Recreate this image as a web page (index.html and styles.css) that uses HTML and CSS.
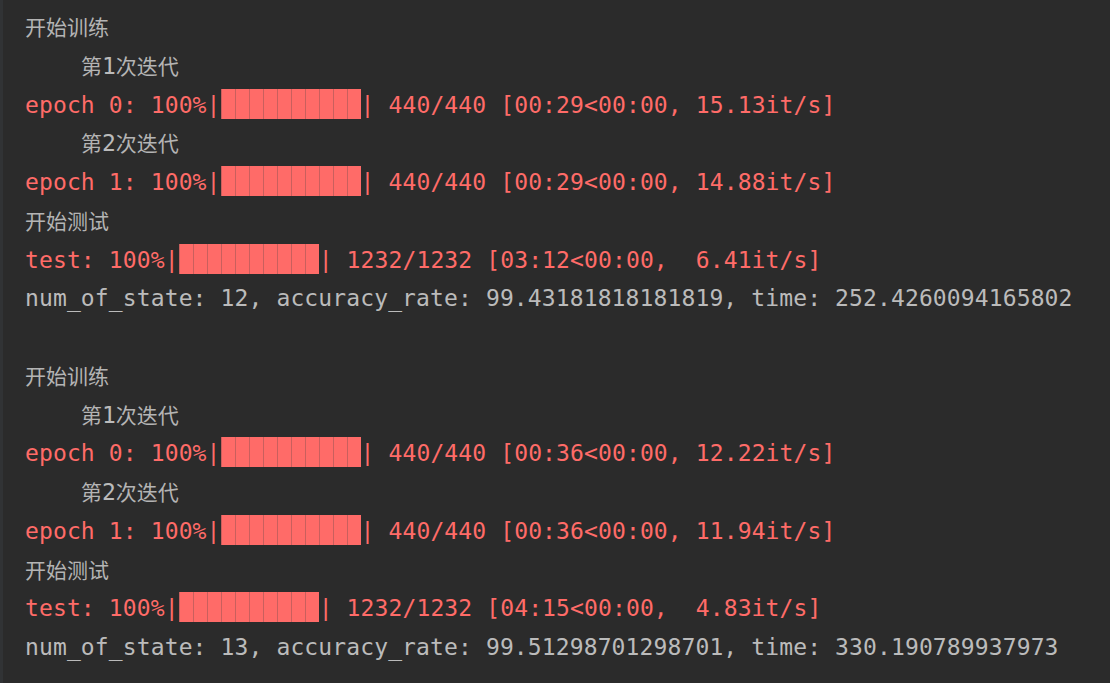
FILE: index.html
```html
<!DOCTYPE html>
<html lang="zh">
<head>
<meta charset="utf-8">
<title>Console</title>
<link rel="stylesheet" href="styles.css">
</head>
<body>
<div class="console">
  <div class="line out"><span class="cjk">开始训练</span></div>
  <div class="line out">    <span class="cjk">第</span>1<span class="cjk">次迭代</span></div>
  <div class="line err">epoch 0: 100%|<span class="bar">██████████</span>| 440/440 [00:29&lt;00:00, 15.13it/s]</div>
  <div class="line out">    <span class="cjk">第</span>2<span class="cjk">次迭代</span></div>
  <div class="line err">epoch 1: 100%|<span class="bar">██████████</span>| 440/440 [00:29&lt;00:00, 14.88it/s]</div>
  <div class="line out"><span class="cjk">开始测试</span></div>
  <div class="line err">test: 100%|<span class="bar">██████████</span>| 1232/1232 [03:12&lt;00:00,  6.41it/s]</div>
  <div class="line out">num_of_state: 12, accuracy_rate: 99.43181818181819, time: 252.4260094165802</div>
  <div class="line out"> </div>
  <div class="line out"><span class="cjk">开始训练</span></div>
  <div class="line out">    <span class="cjk">第</span>1<span class="cjk">次迭代</span></div>
  <div class="line err">epoch 0: 100%|<span class="bar">██████████</span>| 440/440 [00:36&lt;00:00, 12.22it/s]</div>
  <div class="line out">    <span class="cjk">第</span>2<span class="cjk">次迭代</span></div>
  <div class="line err">epoch 1: 100%|<span class="bar">██████████</span>| 440/440 [00:36&lt;00:00, 11.94it/s]</div>
  <div class="line out"><span class="cjk">开始测试</span></div>
  <div class="line err">test: 100%|<span class="bar">██████████</span>| 1232/1232 [04:15&lt;00:00,  4.83it/s]</div>
  <div class="line out">num_of_state: 13, accuracy_rate: 99.51298701298701, time: 330.190789937973</div>
</div>
</body>
</html>
```
FILE: styles.css
```css
html, body {
  margin: 0;
  padding: 0;
  background: #2b2b2b;
  height: 100%;
  overflow: hidden;
}
.console {
  box-sizing: border-box;
  height: 100%;
  border-left: 3px solid #313335;
  padding: 8px 0 0 22px;
  font-family: "DejaVu Sans Mono", "Liberation Mono", monospace;
  font-size: 23px;
  letter-spacing: 0.12px;
  line-height: 38.75px;
}
.line {
  white-space: pre;
  height: 38.75px;
}
.out { color: #bbbbbb; }
.err { color: #ff6b68; }
.cjk {
  font-family: "Noto Sans CJK SC", "Noto Sans", sans-serif;
  font-size: 21px;
  letter-spacing: 0;
  line-height: 30px;
  color: #b4b4b4;
}
.bar {
  position: relative;
  display: inline-block;
  width: 140px;
  height: 30px;
  line-height: 30px;
  overflow: hidden;
  vertical-align: -6px;
  letter-spacing: 0;
  background: #ff6b68;
  color: #ff6b68;
}
.bar::after {
  content: "";
  position: absolute;
  inset: 0;
  background: repeating-linear-gradient(to right, #c95f5d 0 1px, transparent 1px 14px);
}
```
